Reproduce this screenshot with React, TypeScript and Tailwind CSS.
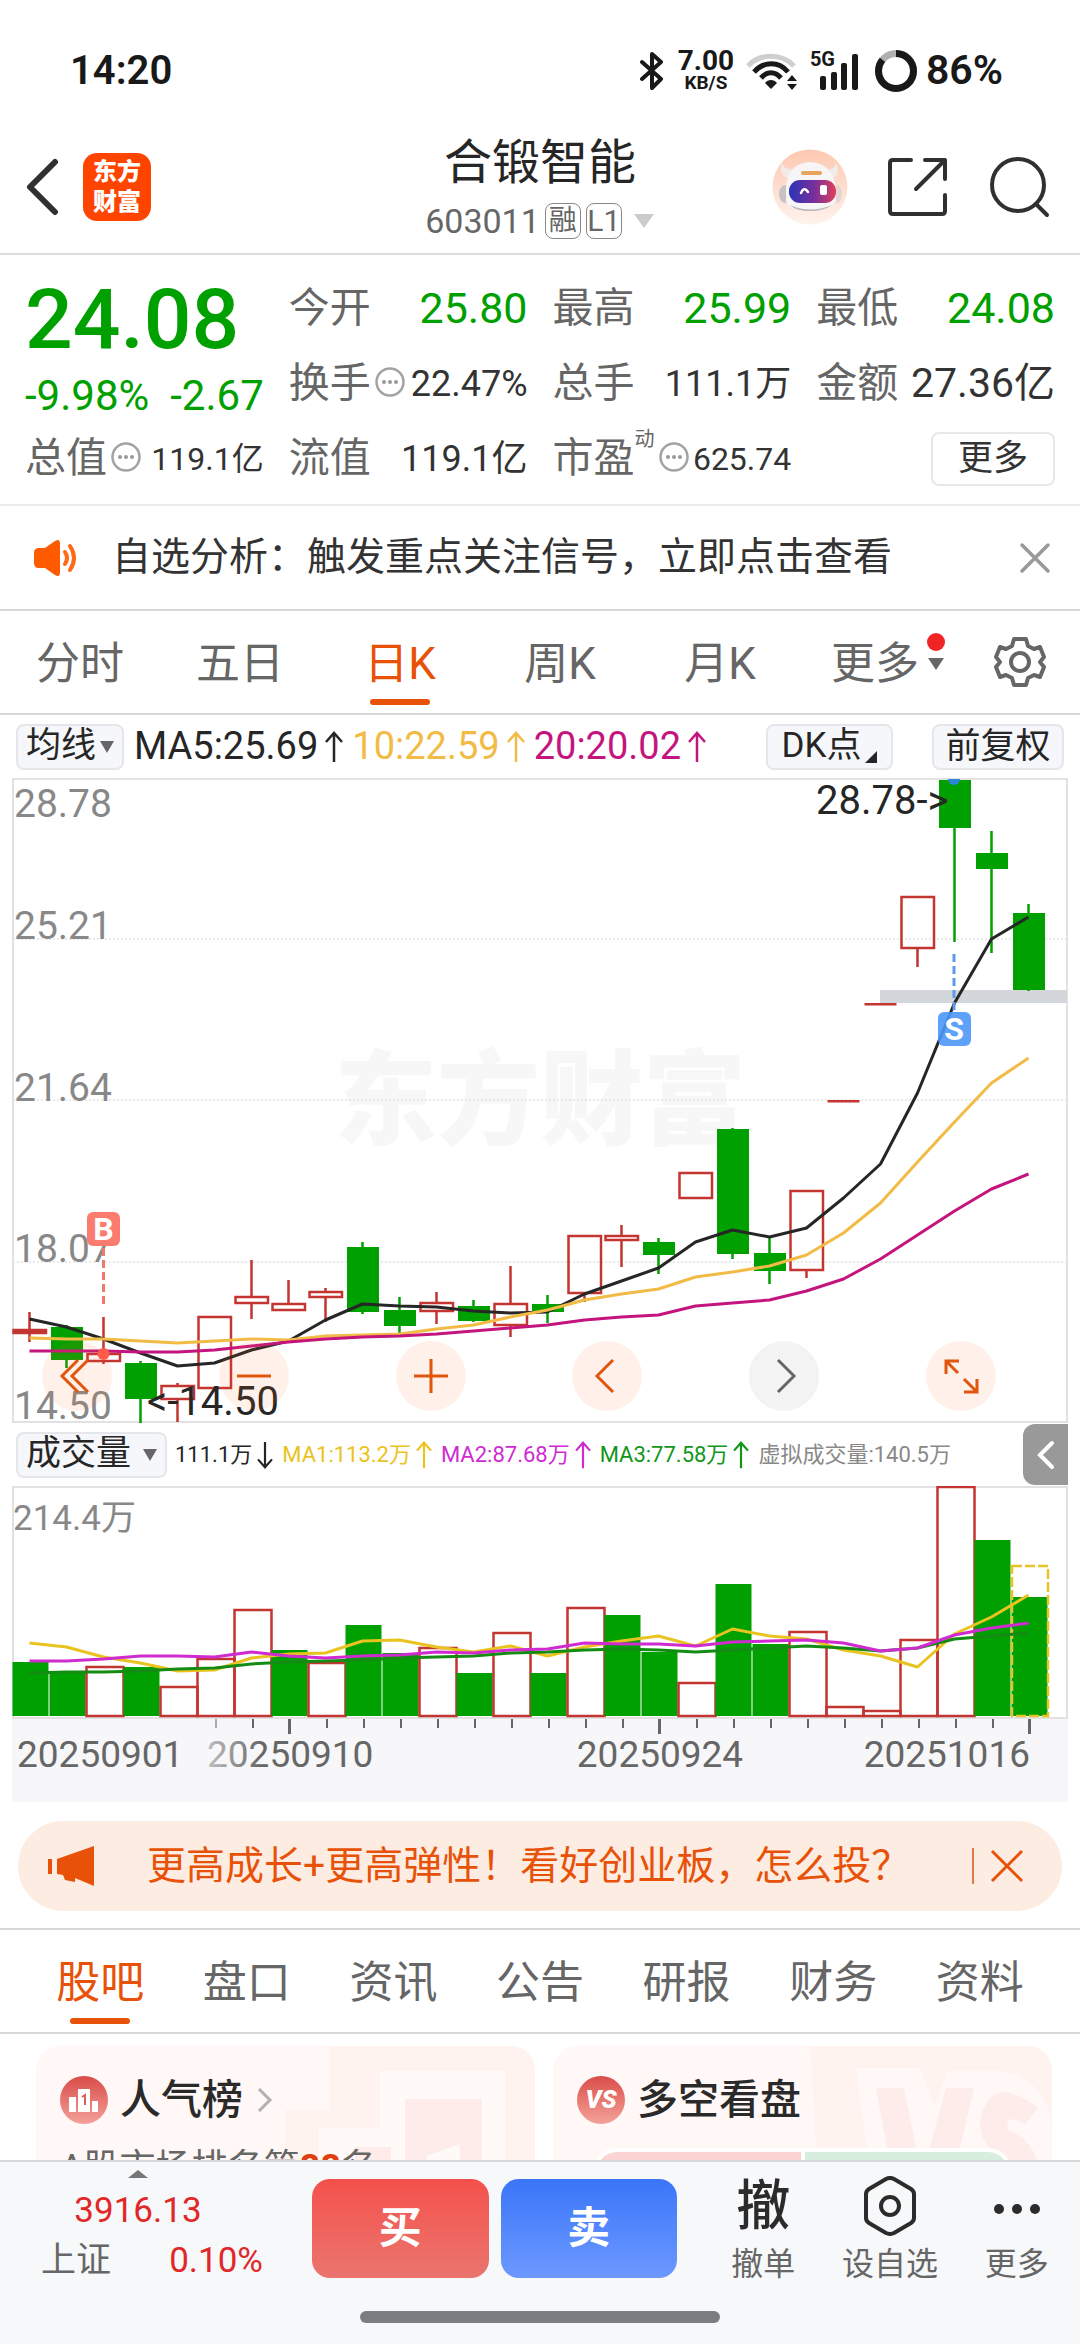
import { ReactNode } from 'react'

const STEP = 37

// [up/down, body top, body bottom, wick top, wick bottom]
type Candle = ['up' | 'down', number, number, number, number]

const candles: Candle[] = [
  ['up', 551, 556, 534, 564],
  ['down', 549, 582, 547, 590],
  ['up', 575, 584, 539, 586],
  ['down', 585, 621, 583, 645],
  ['up', 607, 622, 605, 644],
  ['up', 538, 611, 538, 611],
  ['up', 518, 526, 482, 541],
  ['up', 525, 533, 502, 533],
  ['up', 513, 520, 510, 544],
  ['down', 469, 534, 464, 536],
  ['down', 532, 548, 519, 556],
  ['up', 524, 534, 514, 546],
  ['down', 528, 543, 522, 544],
  ['up', 525, 548, 488, 559],
  ['down', 526, 534, 517, 545],
  ['up', 457, 516, 457, 524],
  ['up', 457, 463, 447, 489],
  ['down', 464, 477, 460, 496],
  ['up', 394, 421, 394, 421],
  ['down', 351, 476, 350, 481],
  ['down', 475, 493, 460, 506],
  ['up', 412, 493, 412, 500],
  ['up', 323, 323, 323, 323],
  ['up', 226, 226, 226, 226],
  ['up', 118, 171, 118, 189],
  ['down', 2, 50, 2, 164],
  ['down', 75, 91, 53, 175],
  ['down', 135, 212, 126, 213],
]

const ma5 = [541, 549, 561, 575, 588, 585, 572, 563, 542, 526, 528, 529, 533, 535, 534, 516, 503, 490, 464, 452, 459, 450, 420, 386, 315, 225, 161, 139]
const ma10 = [560, 561, 561, 563, 565, 563, 561, 562, 558, 557, 556, 551, 547, 539, 532, 522, 516, 511, 499, 494, 488, 477, 455, 425, 384, 344, 305, 280]
const ma20 = [573, 573, 573, 574, 574, 572, 568, 564, 561, 559, 558, 556, 553, 550, 547, 542, 539, 537, 528, 525, 522, 513, 501, 481, 457, 433, 411, 396]

const volumeTops = [176, 185, 180, 181, 200, 172, 123, 164, 176, 139, 167, 161, 187, 146, 187, 121, 129, 166, 196, 98, 158, 145, 220, 224, 153, 0, 54, 111]
const volumeDown = [0, 1, 3, 7, 9, 10, 12, 14, 16, 17, 19, 20, 26, 27]
const volMa1 = [157, 161, 171, 177, 185, 184, 172, 168, 167, 155, 154, 161, 166, 160, 170, 161, 155, 150, 160, 143, 150, 153, 164, 170, 181, 148, 131, 109]
const volMa2 = [175, 175, 173, 170, 170, 171, 166, 170, 172, 170, 169, 166, 167, 164, 163, 157, 158, 158, 160, 156, 155, 154, 157, 165, 162, 149, 142, 137]
const volMa3 = [187, 186, 186, 185, 183, 182, 178, 176, 175, 174, 172, 171, 170, 167, 166, 164, 163, 164, 166, 164, 162, 160, 162, 165, 162, 153, 150, 147]

const toPoints = (ys: number[]) => ys.map((y, i) => `${17.5 + i * STEP},${y}`).join(' ')

// STATUS BAR
function StatusBar() {
  return (
    <div className="flex h-[129px] shrink-0 items-center justify-between pl-[70px] pr-[77px] pt-3 text-[#191919]">
      <span className="text-[40px] font-semibold">14:20</span>
      <div className="flex items-center">
        <svg viewBox="0 0 24 40" className="h-10 w-6" fill="none" stroke="currentColor" strokeWidth="4" strokeLinejoin="round" strokeLinecap="round">
          <path d="M2 11 L21 28 L12 37 V3 L21 11 L2 28" />
        </svg>
        <div className="ml-3 flex w-[60px] flex-col items-center font-bold">
          <span className="text-[28px] leading-6">7.00</span>
          <span className="text-[19px] leading-5">KB/S</span>
        </div>
        <svg viewBox="0 0 52 40" className="ml-2.5 h-10 w-[52px]" fill="none" strokeWidth="5">
          <path d="M2 15 C14 2 36 2 48 15" stroke="#cfcfcf" />
          <path d="M8 21 C18 10 33 10 42 21" stroke="currentColor" />
          <path d="M15 27 C21 20 29 20 35 27" stroke="currentColor" />
          <path d="M25 38 L19 32 C22 28 28 28 31 32 Z" fill="currentColor" />
          <path d="M46 24 L51 30 H41 Z M46 39 L41 33 H51 Z" fill="currentColor" />
        </svg>
        <div className="relative ml-1 h-10 w-[56px]">
          <span className="absolute left-2 top-0 text-[20px] font-bold leading-4">5G</span>
          <svg viewBox="0 0 56 40" className="h-10 w-[56px]" fill="currentColor">
            <rect x="18" y="25" width="6" height="14" rx="2" />
            <rect x="29" y="21" width="6" height="18" rx="2" />
            <rect x="39" y="12" width="6" height="27" rx="2" />
            <rect x="50" y="3" width="6" height="36" rx="2" />
          </svg>
        </div>
        <svg viewBox="0 0 44 44" className="ml-4 h-11 w-11" fill="none" strokeWidth="7">
          <circle cx="22" cy="22" r="17.5" stroke="#b0b0b0" />
          <circle cx="22" cy="22" r="17.5" stroke="currentColor" pathLength="100" strokeDasharray="86 14" transform="rotate(-90 22 22)" />
        </svg>
        <span className="ml-2 text-[41px] font-semibold">86%</span>
      </div>
    </div>
  )
}

function RobotAvatar() {
  return (
    <svg viewBox="0 0 76 76" className="h-[76px] w-[76px]">
      <defs>
        <linearGradient id="avatarBg" x1="0" y1="0" x2="0" y2="1">
          <stop offset="0" stopColor="#fdc8b0" />
          <stop offset="1" stopColor="#fff3ee" />
        </linearGradient>
        <linearGradient id="visor" x1="0" y1="0" x2="1" y2="0">
          <stop offset="0" stopColor="#2b34b8" />
          <stop offset="0.55" stopColor="#7a2f9c" />
          <stop offset="1" stopColor="#e0405a" />
        </linearGradient>
      </defs>
      <circle cx="38" cy="38" r="37.5" fill="url(#avatarBg)" />
      <path d="M10 14 Q6 26 17 30 L23 20 Q13 22 10 14 Z M64 14 Q70 26 59 30 L53 20 Q62 22 64 14 Z" fill="#f0eae8" />
      <ellipse cx="13" cy="45" rx="6" ry="9" fill="#c9c2c4" />
      <ellipse cx="65" cy="45" rx="5" ry="9" fill="#e4d6d5" />
      <path d="M14 38 Q16 14 38 13 Q60 14 64 38 V52 Q58 62 38 62 Q18 62 14 52 Z" fill="#f7f5f5" />
      <path d="M18 56 Q38 65 60 56 Q52 62 38 62 Q24 62 18 56 Z" fill="#b9b4b8" />
      <rect x="29" y="22" width="21" height="4" rx="2" fill="#e8a35c" />
      <rect x="17" y="31" width="47" height="23" rx="11" fill="url(#visor)" />
      <path d="M29 44 Q32 37 36 43" fill="none" stroke="#fff" strokeWidth="2.5" strokeLinecap="round" />
      <rect x="48" y="36" width="7" height="10" rx="2" fill="#fff" />
    </svg>
  )
}

// TITLE ROW
function Header() {
  return (
    <header className="grid h-[126px] shrink-0 grid-cols-[1fr_auto_1fr] items-center border-b-2 border-[#dcdcdc]">
      <div className="flex items-center pb-2 pl-[26px]">
        <button aria-label="返回">
          <svg viewBox="0 0 34 58" className="h-[58px] w-[34px]" fill="none" stroke="#303030" strokeWidth="6" strokeLinecap="round" strokeLinejoin="round">
            <path d="M29 4 L4 29 L29 54" />
          </svg>
        </button>
        <div className="ml-[23px] flex h-[68px] w-[68px] flex-col items-center justify-center rounded-[14px] bg-[#ff4400] text-[24px] font-black leading-[30px] text-white">
          <span>东方</span>
          <span>财富</span>
        </div>
      </div>
      <div className="flex flex-col items-center">
        <h1 className="text-[48px] leading-[60px] text-[#262626]">合锻智能</h1>
        <button className="flex items-center gap-[5px] text-[34px] leading-[56px] text-[#666]">
          <span>603011</span>
          <span className="flex h-9 w-9 items-center justify-center rounded-lg border border-[#888] text-[28px]">融</span>
          <span className="flex h-9 w-9 items-center justify-center rounded-lg border border-[#888] text-[30px]">L1</span>
          <svg viewBox="0 0 22 16" className="ml-1.5 h-4 w-[22px]" fill="#cbcbcb">
            <path d="M1 1 H21 L11 15 Z" />
          </svg>
        </button>
      </div>
      <div className="flex items-center justify-end gap-10 pb-2 pr-[30px]">
        <button aria-label="助手">
          <RobotAvatar />
        </button>
        <button aria-label="分享">
          <svg viewBox="0 0 60 60" className="h-[60px] w-[60px]" fill="none" stroke="#303030" strokeWidth="4" strokeLinecap="round" strokeLinejoin="round">
            <path d="M23 3 H5 Q2 3 2 6 V54 Q2 57 5 57 H54 Q57 57 57 54 V38" />
            <path d="M37 3 H57 V22 M56 4 L28 32" />
          </svg>
        </button>
        <button aria-label="搜索">
          <svg viewBox="0 0 62 62" className="h-[62px] w-[62px]" fill="none" stroke="#303030" strokeWidth="4" strokeLinecap="round">
            <circle cx="30" cy="29" r="26" />
            <path d="M48 48 L59 59" />
          </svg>
        </button>
      </div>
    </header>
  )
}

function InfoDot() {
  return (
    <svg viewBox="0 0 30 30" className="mb-1 ml-1 h-[30px] w-[30px] shrink-0">
      <circle cx="15" cy="15" r="13.5" fill="none" stroke="#a3a3a3" strokeWidth="2.5" />
      <circle cx="9" cy="15" r="2" fill="#999" />
      <circle cx="15" cy="15" r="2" fill="#999" />
      <circle cx="21" cy="15" r="2" fill="#999" />
    </svg>
  )
}

function Stat({ label, sup, info, children }: { label: string, sup?: string, info?: boolean, children: ReactNode }) {
  return (
    <div className="flex h-[75px] items-center whitespace-nowrap">
      <span className="text-[41px] text-[#666]">{label}</span>
      {sup && <sup className="-top-5 text-[20px] text-[#666]">{sup}</sup>}
      {info && <InfoDot />}
      <span className="ml-auto">{children}</span>
    </div>
  )
}

// QUOTE
function Quote() {
  return (
    <section className="grid h-[251px] shrink-0 grid-cols-4 gap-x-[25px] border-b-2 border-[#ebebeb] pl-[25px] pr-[25px] pt-4">
      <div>
        <p className="h-[98px] text-[84px] font-medium leading-[98px] text-[#00a000]">24.08</p>
        <p className="flex h-[52px] items-center justify-between text-[42px] text-[#00a000]">
          <span>-9.98%</span>
          <span>-2.67</span>
        </p>
        <Stat label="总值" info><span className="text-[32px] text-[#333]">119.1亿</span></Stat>
      </div>
      <div>
        <Stat label="今开"><span className="text-[43px] text-[#00a000]">25.80</span></Stat>
        <Stat label="换手" info><span className="text-[36px] text-[#333]">22.47%</span></Stat>
        <Stat label="流值"><span className="text-[36px] text-[#333]">119.1亿</span></Stat>
      </div>
      <div>
        <Stat label="最高"><span className="text-[43px] text-[#00a000]">25.99</span></Stat>
        <Stat label="总手"><span className="text-[36px] text-[#333]">111.1万</span></Stat>
        <Stat label="市盈" sup="动" info><span className="text-[32px] text-[#333]">625.74</span></Stat>
      </div>
      <div>
        <Stat label="最低"><span className="text-[43px] text-[#00a000]">24.08</span></Stat>
        <Stat label="金额"><span className="text-[41px] text-[#333]">27.36亿</span></Stat>
        <div className="flex h-[75px] items-center justify-end">
          <button className="h-[54px] w-[124px] rounded-lg border-2 border-[#e8e8e8] text-[35px] leading-none text-[#333]">更多</button>
        </div>
      </div>
    </section>
  )
}

// SIGNAL NOTICE
function Notice() {
  return (
    <div className="flex h-[105px] shrink-0 items-center border-b-2 border-[#d8d8d8] pl-[33px] pr-7">
      <svg viewBox="0 0 46 38" className="h-[38px] w-[46px]">
        <path d="M6 9 H12 L22 2 Q27 -1 27 5 V33 Q27 39 22 36 L12 29 H6 Q1 29 1 24 V14 Q1 9 6 9 Z" fill="#ff5a00" />
        <path d="M32 13 Q36 19 32 25 M37 7 Q45 19 37 31" fill="none" stroke="#ff6a1a" strokeWidth="4" strokeLinecap="round" />
      </svg>
      <a href="#signal" className="ml-[33px] flex-1 text-[39px] text-[#333]">自选分析：触发重点关注信号，立即点击查看</a>
      <button aria-label="关闭">
        <svg viewBox="0 0 34 34" className="h-[34px] w-[34px]" stroke="#999" strokeWidth="3.5" strokeLinecap="round">
          <path d="M4 4 L30 30 M30 4 L4 30" />
        </svg>
      </button>
    </div>
  )
}

// PERIOD TABS
function PeriodTabs() {
  const tabs = ['分时', '五日', '日K', '周K', '月K']
  return (
    <nav className="grid h-[104px] shrink-0 grid-cols-[repeat(6,4fr)_3fr] border-b-2 border-[#d8d8d8] text-[44px] text-[#666]">
      {tabs.map((tab) => (
        <button key={tab} className={tab === '日K' ? 'relative pt-1 text-[#e85208]' : 'relative pt-1'}>
          {tab}
          {tab === '日K' && <span className="absolute bottom-2 left-1/2 h-1.5 w-[60px] -translate-x-1/2 rounded-full bg-[#e85208]" />}
        </button>
      ))}
      <button className="flex items-center justify-center gap-2 pl-4 pt-1">
        更多
        <span className="relative">
          <svg viewBox="0 0 18 14" className="h-3.5 w-[18px]" fill="#666">
            <path d="M1 1 H17 L9 13 Z" />
          </svg>
          <span className="absolute -top-6 left-0 h-[18px] w-[18px] rounded-full bg-[#f02424]" />
        </span>
      </button>
      <button aria-label="设置" className="flex items-center justify-center">
        <svg viewBox="0 0 52 52" className="h-[52px] w-[52px]" fill="none" stroke="#666" strokeWidth="4" strokeLinejoin="round">
          <path d="M20 3 H32 L34 10 L40 13 L46 11 L50 21 L46 26 L50 31 L46 41 L40 39 L34 42 L32 49 H20 L18 42 L12 39 L6 41 L2 31 L6 26 L2 21 L6 11 L12 13 L18 10 Z" />
          <circle cx="26" cy="26" r="9" />
        </svg>
      </button>
    </nav>
  )
}

function Arrow({ down, small }: { down?: boolean, small?: boolean }) {
  return (
    <svg viewBox="0 0 20 32" className={small ? 'ml-1 h-7 w-[18px]' : 'ml-1.5 h-8 w-5'} fill="none" stroke="currentColor" strokeWidth="2.5">
      {down ? <path d="M10 1 V30 M2 21 L10 30 L18 21" /> : <path d="M10 31 V2 M2 11 L10 2 L18 11" />}
    </svg>
  )
}

// MOVING AVERAGE LEGEND
function MaLegend() {
  return (
    <div className="flex h-[63px] shrink-0 items-center px-4 text-[38px] text-[#262626]">
      <button className="flex h-[46px] w-[108px] items-center justify-center gap-1 rounded-lg border-2 border-[#e4e6ea] bg-[#f6f7fa] text-[35px]">
        均线
        <svg viewBox="0 0 14 12" className="h-3 w-3.5" fill="#666">
          <path d="M0 0 H14 L7 12 Z" />
        </svg>
      </button>
      <span className="ml-2.5 flex items-center">MA5:25.69<Arrow /></span>
      <span className="ml-2 flex items-center text-[#f2bb45]">10:22.59<Arrow /></span>
      <span className="ml-2 flex items-center text-[#c4157f]">20:20.02<Arrow /></span>
      <button className="ml-auto flex h-[46px] w-[127px] items-center justify-center gap-1 rounded-lg border-2 border-[#e4e6ea] bg-[#f6f7fa] text-[35px]">
        DK点
        <svg viewBox="0 0 12 12" className="mt-5 h-3 w-3" fill="#262626">
          <path d="M12 0 V12 H0 Z" />
        </svg>
      </button>
      <button className="ml-[39px] h-[46px] w-[132px] rounded-lg border-2 border-[#e4e6ea] bg-[#f6f7fa] text-[35px] leading-none">前复权</button>
    </div>
  )
}

// K LINE CHART
function CandleChart() {
  return (
    <div className="relative mx-3">
      <svg viewBox="0 0 1056 645" className="block w-full" role="img" aria-label="日K线">
        <text x="528" y="359" textAnchor="middle" fontSize="103" fontWeight="900" fill="#f7f7f7">东方财富</text>
        {[161, 322, 484].map((y) => (
          <line key={y} x1="1" x2="1055" y1={y} y2={y} stroke="#d4d4d4" strokeDasharray="2 2" />
        ))}
        <rect x="1" y="1" width="1054" height="643" fill="none" stroke="#e2e2e2" strokeWidth="2" />
        <rect x="868" y="212" width="187" height="13" fill="#d3d6db" />
        <g fill="#888" fontSize="39">
          <text x="2" y="39">28.78</text>
          <text x="2" y="161">25.21</text>
          <text x="2" y="323">21.64</text>
          <text x="2" y="484">18.07</text>
          <text x="2" y="641">14.50</text>
        </g>
        {candles.map(([dir, top, bottom, high, low], i) => {
          const x = 17.5 + i * STEP
          if (dir === 'down') {
            return (
              <g key={i} fill="#00a000">
                <rect x={x - 15.5} y={top} width="32" height={bottom - top} />
                <rect x={x - 1.25} y={high} width="2.5" height={low - high} />
              </g>
            )
          }
          if (top === bottom) return <rect key={i} x={x - 16} y={top - 1} width="32" height="2.5" fill="#c23531" />
          const left = Math.max(x - 16, 1)
          return (
            <g key={i} stroke="#c23531" strokeWidth="2.5" fill="none">
              <rect x={left} y={top + 1} width={x + 16.5 - left} height={bottom - top - 2} fill={i === 0 ? '#c23531' : 'none'} />
              <path d={`M${x} ${high} V${top} M${x} ${bottom} V${low}`} />
            </g>
          )
        })}
        <g fill="none" strokeWidth="3" strokeLinejoin="round">
          <polyline points={toPoints(ma5)} stroke="#262626" />
          <polyline points={toPoints(ma10)} stroke="#f2bb45" />
          <polyline points={toPoints(ma20)} stroke="#c4157f" />
        </g>
        {/* buy / sell marks */}
        <line x1="91.5" x2="91.5" y1="470" y2="527" stroke="#f0796e" strokeWidth="3" strokeDasharray="8 4" />
        <circle cx="91.5" cy="576" r="6" fill="#ff5a4f" />
        <rect x="75" y="434" width="33" height="34" rx="6" fill="#fb7c6e" />
        <text x="91.5" y="462" textAnchor="middle" fontSize="32" fontWeight="700" fill="#fff">B</text>
        <path d="M936 1 A6 6 0 0 0 948 1 Z" fill="#2f86d8" />
        <line x1="942" x2="942" y1="176" y2="233" stroke="#5b9bea" strokeWidth="3" strokeDasharray="8 4" />
        <rect x="926" y="234" width="33" height="34" rx="6" fill="#4c97f8" fillOpacity="0.9" />
        <text x="942" y="262" textAnchor="middle" fontSize="32" fontWeight="700" fill="#fff">S</text>
        <g fill="#262626" fontSize="40">
          <text x="804" y="36">28.78-&gt;</text>
          <text x="135" y="637">&lt;-14.50</text>
        </g>
      </svg>
      <ChartControls />
    </div>
  )
}

const controls = [
  { label: '最早', d: 'M36 19 L20 35 L36 51 M46 19 L30 35 L46 51' },
  { label: '缩小', d: 'M18 35 H52' },
  { label: '放大', d: 'M18 35 H52 M35 18 V52' },
  { label: '左移', d: 'M41 19 L25 35 L41 51' },
  { label: '右移', d: 'M29 19 L45 35 L29 51', off: true },
  { label: '全屏', d: 'M20 33 V20 H33 M20 20 L32 32 M51 38 V51 H38 M51 51 L38 38' },
]

function ChartControls() {
  return (
    <div className="absolute bottom-3 left-[30px] right-[72px] flex justify-between">
      {controls.map((c) => (
        <button
          key={c.label}
          aria-label={c.label}
          className={c.off ? 'h-[70px] w-[70px] rounded-full bg-[#666]/8 text-[#666]' : 'h-[70px] w-[70px] rounded-full bg-[#ff6a20]/10 text-[#e0560f]'}
        >
          <svg viewBox="0 0 70 70" fill="none" stroke="currentColor" strokeWidth="3">
            <path d={c.d} />
          </svg>
        </button>
      ))}
    </div>
  )
}

// VOLUME LEGEND
function VolumeLegend() {
  return (
    <div className="mx-3 flex h-[63px] shrink-0 items-center gap-2 whitespace-nowrap pl-1 text-[22px] text-[#262626]">
      <button className="flex h-[46px] w-[151px] items-center justify-center gap-3 rounded-lg border-2 border-[#e4e6ea] bg-[#f6f7fa] text-[35px]">
        成交量
        <svg viewBox="0 0 14 12" className="h-3 w-3.5" fill="#666">
          <path d="M0 0 H14 L7 12 Z" />
        </svg>
      </button>
      <span className="flex items-center">111.1万<Arrow down small /></span>
      <span className="flex items-center text-[#ecc21c]">MA1:113.2万<Arrow small /></span>
      <span className="flex items-center text-[#cf2bd0]">MA2:87.68万<Arrow small /></span>
      <span className="flex items-center text-[#12961a]">MA3:77.58万<Arrow small /></span>
      <span className="text-[#888]">虚拟成交量:140.5万</span>
      <button aria-label="收起" className="ml-auto flex h-[61px] w-[45px] items-center justify-center rounded-l-xl bg-[#999]">
        <svg viewBox="0 0 18 30" className="h-[30px] w-[18px]" fill="none" stroke="#fff" strokeWidth="4" strokeLinecap="round">
          <path d="M15 3 L3 15 L15 27" />
        </svg>
      </button>
    </div>
  )
}

// VOLUME CHART
function VolumeChart() {
  return (
    <div className="mx-3">
      <svg viewBox="0 0 1056 316" className="block w-full" role="img" aria-label="成交量">
        <defs>
          <linearGradient id="dateFade" gradientUnits="userSpaceOnUse" x1="190" y1="0" x2="250" y2="0">
            <stop offset="0" stopColor="#c8c8c8" />
            <stop offset="1" stopColor="#666" />
          </linearGradient>
        </defs>
        <rect x="0" y="233" width="1056" height="83" fill="#f7f7fa" />
        <rect x="1" y="1" width="1054" height="231" fill="none" stroke="#e2e2e2" strokeWidth="2" />
        <text x="1" y="44" fontSize="35" fill="#888">214.4万</text>
        {volumeTops.map((top, i) => {
          const x = i * STEP
          return volumeDown.includes(i) ? (
            <rect key={i} x={x + 0.5} y={top} width="36" height={230 - top} fill="#00a000" />
          ) : (
            <rect key={i} x={x + 0.5} y={top + 1} width="37" height={229 - top} fill="none" stroke="#c23531" strokeWidth="2.5" />
          )
        })}
        <rect x="1000" y="80" width="36" height="150" fill="none" stroke="#e8c428" strokeWidth="2.5" strokeDasharray="10 3" />
        <g fill="none" strokeWidth="3" strokeLinejoin="round">
          <polyline points={toPoints(volMa1)} stroke="#e9c320" />
          <polyline points={toPoints(volMa3)} stroke="#148c14" />
          <polyline points={toPoints(volMa2)} stroke="#cf2bd0" />
        </g>
        {candles.slice(5).map((_, n) => {
          const i = n + 5
          const long = i === 7 || i === 17 || i === 27
          return <rect key={i} x={18 + i * STEP - (long ? 1 : 0)} y="233" width={long ? 3 : 2} height={long ? 15 : 9} fill={i === 5 ? '#aaa' : '#666'} />
        })}
        <g fill="#666" fontSize="37">
          <text x="5" y="281">20250901</text>
          <text x="195" y="281" fill="url(#dateFade)">20250910</text>
          <text x="648" y="281" textAnchor="middle">20250924</text>
          <text x="1018" y="281" textAnchor="end">20251016</text>
        </g>
      </svg>
    </div>
  )
}

// PROMO BANNER
function Banner() {
  return (
    <div className="mx-[18px] mb-[17px] mt-[19px] flex h-[90px] shrink-0 items-center rounded-full bg-[#fdece2] pl-[30px] pr-[38px] text-[#e85208]">
      <svg viewBox="0 0 46 40" className="h-10 w-[46px]" fill="currentColor">
        <path d="M0 13 H4 V28 H0 Z M9 13 L46 0 V40 L27 32 V36 L17 34 L15 29 L9 28 Z" />
      </svg>
      <a href="#promo" className="ml-[53px] flex-1 text-[39px]">更高成长+更高弹性！看好创业板，怎么投？</a>
      <span className="h-9 w-0.5 bg-[#e07a48]" />
      <button aria-label="关闭" className="ml-4">
        <svg viewBox="0 0 34 34" className="h-[34px] w-[34px]" stroke="currentColor" strokeWidth="3">
          <path d="M2 2 L32 32 M32 2 L2 32" />
        </svg>
      </button>
    </div>
  )
}

// CONTENT TABS
function ContentTabs() {
  const tabs = ['股吧', '盘口', '资讯', '公告', '研报', '财务', '资料']
  return (
    <nav className="flex h-[106px] shrink-0 border-y-2 border-[#d8d8d8] px-[27px] text-[44px] text-[#666]">
      {tabs.map((tab, i) => (
        <button key={tab} className={i === 0 ? 'relative flex-1 pt-1 text-[#e85208]' : 'relative flex-1 pt-1'}>
          {tab}
          {i === 0 && <span className="absolute bottom-2 left-1/2 h-1.5 w-[60px] -translate-x-1/2 rounded-full bg-[#e85208]" />}
        </button>
      ))}
    </nav>
  )
}

// CARDS
function Cards() {
  return (
    <div className="grid shrink-0 grid-cols-2 gap-[18px] pl-9 pr-7 pt-3">
      <section className="relative h-[200px] overflow-hidden rounded-[24px] bg-[#fff8f6] px-6 pt-[30px]">
        <svg viewBox="0 0 250 200" className="absolute right-0 top-0 h-[200px] w-[250px]">
          <path d="M0 64 H45 V0 H250 V200 H0 Z" fill="#fff3f0" />
          <path d="M34 82 H95 V25 H220 V200 H34 Z" fill="#fff9f7" />
          <path d="M70 101 H106 V200 H70 Z M120 53 H197 V200 H175 V98 L142 110 V200 H120 Z" fill="#fdecea" />
        </svg>
        <h2 className="relative flex items-center text-[41px] font-medium leading-[48px] text-[#2a2a2a]">
          <svg viewBox="0 0 48 48" className="mr-3 h-12 w-12">
            <defs>
              <linearGradient id="badge" x1="0" y1="0" x2="0" y2="1">
                <stop offset="0" stopColor="#d94b48" />
                <stop offset="1" stopColor="#f3a19a" />
              </linearGradient>
            </defs>
            <circle cx="24" cy="24" r="24" fill="url(#badge)" />
            <path d="M9 21 H16 V36 H9 Z M18 13 H30 V36 H18 Z M32 25 H38 V36 H32 Z" fill="#fff" />
            <path d="M22 21 L25 19 V29" fill="none" stroke="#d9605c" strokeWidth="2" />
          </svg>
          人气榜
          <svg viewBox="0 0 16 26" className="ml-3.5 h-[26px] w-4" fill="none" stroke="#b5b0b0" strokeWidth="3">
            <path d="M2 2 L13 13 L2 24" />
          </svg>
        </h2>
        <p className="relative mt-5 text-[36px] leading-[48px] text-[#666]">A股市场排名第<b className="text-[#e04010]">88</b>名</p>
      </section>
      <section className="relative h-[200px] overflow-hidden rounded-[24px] bg-[#fff8f6] px-6 pt-[30px]">
        <svg viewBox="0 0 242 200" className="absolute right-0 top-0 h-[200px] w-[242px]">
          <path d="M0 0 H242 V200 H12 Z" fill="#fff3f0" />
          <path d="M46 22 H110 L124 60 L138 25 H190 Q242 34 242 90 V200 H70 Z" fill="#fff8f6" />
          <path d="M66 42 H94 L112 130 L136 42 H164 L132 180 H92 Z M228 62 Q180 25 170 75 Q170 105 200 115 Q214 124 190 130 L160 105 L150 150 Q232 170 228 116 Q220 92 198 84 Q194 66 215 78 Z" fill="#fdecea" />
        </svg>
        <h2 className="relative flex items-center text-[41px] font-medium leading-[48px] text-[#2a2a2a]">
          <span className="mr-3 flex h-12 w-12 items-center justify-center rounded-full bg-linear-to-b from-[#d94b48] to-[#f3a19a] text-[25px] font-black italic text-white">VS</span>
          多空看盘
        </h2>
        <div className="relative mx-4 mt-6 flex h-16 gap-1 overflow-hidden rounded-[24px] border-4 border-white bg-white">
          <span className="flex-1 bg-[#fad4d2]" />
          <span className="flex-1 bg-[#d5eedd]" />
        </div>
      </section>
    </div>
  )
}

function BarItem({ label, children }: { label: string, children: ReactNode }) {
  return (
    <button className="flex flex-1 flex-col items-center">
      <span className="flex h-[60px] items-center justify-center text-[#2b2b2b]">{children}</span>
      <span className="mt-1 text-[32px] leading-[48px] text-[#666]">{label}</span>
    </button>
  )
}

// TRADE BAR
function TradeBar() {
  return (
    <footer className="shrink-0 border-t-2 border-[#d6d9dc] bg-[#f7f8fa] pt-2">
      <div className="grid h-[126px] grid-cols-[312fr_365fr_403fr]">
        <button className="flex flex-col items-center pr-9 text-[35px] text-[#e02828]">
          <svg viewBox="0 0 20 8" className="h-2 w-5 shrink-0" fill="#777">
            <path d="M0 8 L10 0 L20 8 Z" />
          </svg>
          <span className="mt-2 leading-[50px]">3916.13</span>
          <span className="ml-7 flex w-[222px] justify-between leading-[50px]">
            <span className="text-[#666]">上证</span>
            <span>0.10%</span>
          </span>
        </button>
        <div className="flex gap-3 pt-[9px] text-[43px] font-bold text-white">
          <button className="h-[99px] flex-1 rounded-[18px] bg-linear-to-b from-[#f5504b] to-[#ea746e]">买</button>
          <button className="h-[99px] flex-1 rounded-[18px] bg-linear-to-b from-[#3a75f8] to-[#6c98ff]">卖</button>
        </div>
        <div className="flex pl-[23px] pt-1.5">
          <BarItem label="撤单"><span className="text-[54px] font-medium">撤</span></BarItem>
          <BarItem label="设自选">
            <svg viewBox="0 0 54 60" className="h-[60px] w-[54px]" fill="none" stroke="currentColor" strokeWidth="4" strokeLinejoin="round">
              <path d="M23 3 Q27 1 31 3 L48 13 Q51 15 51 18 V42 Q51 45 48 47 L31 57 Q27 59 23 57 L6 47 Q3 45 3 42 V18 Q3 15 6 13 Z" />
              <circle cx="27" cy="30" r="9" />
            </svg>
          </BarItem>
          <BarItem label="更多">
            <svg viewBox="0 0 48 12" className="mt-1.5 h-3 w-12" fill="currentColor">
              <circle cx="6" cy="6" r="5" />
              <circle cx="24" cy="6" r="5" />
              <circle cx="42" cy="6" r="5" />
            </svg>
          </BarItem>
        </div>
      </div>
      <div className="flex h-12 justify-center pt-[15px]">
        <span className="h-3 w-1/3 rounded-full bg-[#7c7d7f]" />
      </div>
    </footer>
  )
}

export default function App() {
  return (
    <div className="flex h-screen flex-col overflow-hidden bg-white font-[Roboto,'Noto_Sans_CJK_SC',sans-serif]">
      <main className="flex min-h-0 flex-1 flex-col overflow-hidden">
        <StatusBar />
        <Header />
        <Quote />
        <Notice />
        <PeriodTabs />
        <MaLegend />
        <CandleChart />
        <VolumeLegend />
        <VolumeChart />
        <Banner />
        <ContentTabs />
        <Cards />
      </main>
      <TradeBar />
    </div>
  )
}
